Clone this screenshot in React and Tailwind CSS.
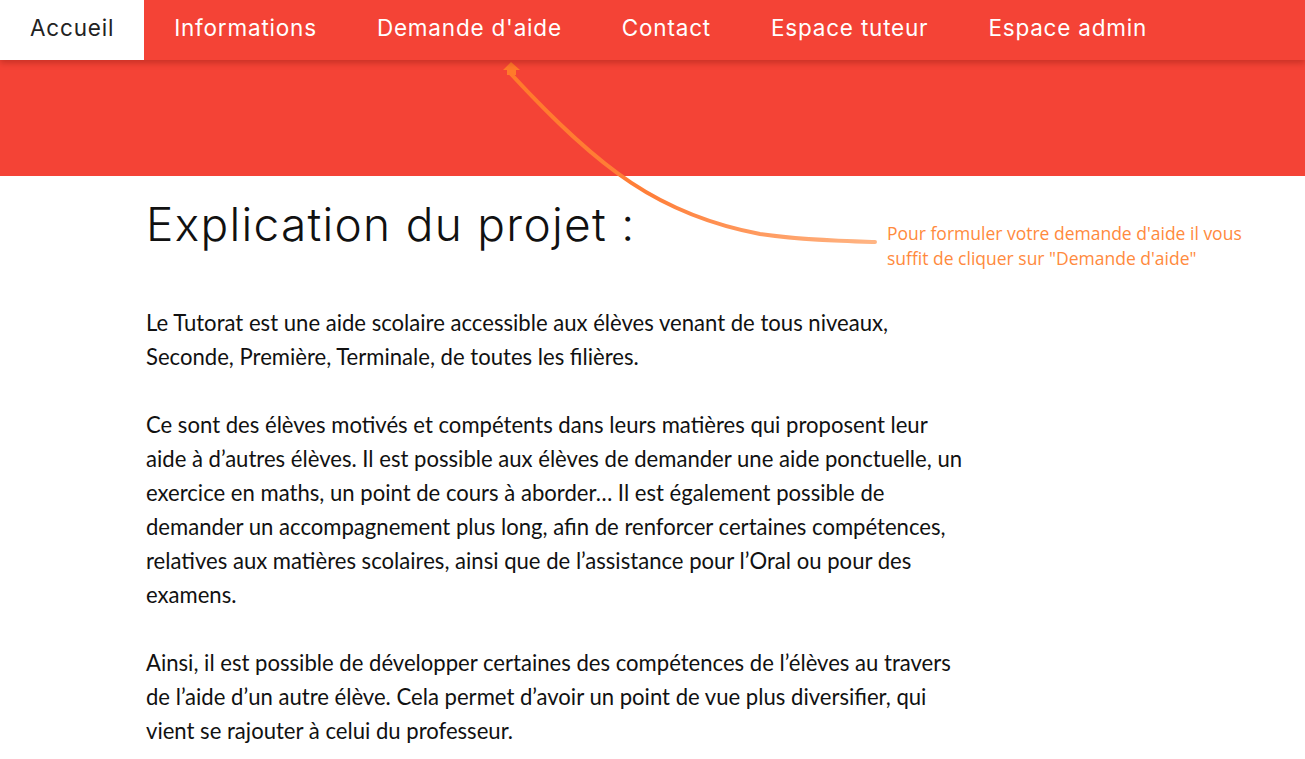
import React from "react";

const navItems = [
  { label: "Accueil", active: true },
  { label: "Informations" },
  { label: "Demande d'aide" },
  { label: "Contact" },
  { label: "Espace tuteur" },
  { label: "Espace admin" },
];

function Navbar() {
  return (
    <div className="relative z-10 flex h-[60px] bg-[#f44336] shadow-[0_3px_6px_rgba(120,20,10,0.35)]">
      {navItems.map((item) => (
        <a
          key={item.label}
          href="#"
          className={`flex items-center px-[30px] pb-[5px] text-[22.5px] tracking-[0.8px] font-['Inter',sans-serif] font-normal ${
            item.active ? "bg-white text-[#222]" : "text-white"
          }`}
        >
          {item.label}
        </a>
      ))}
    </div>
  );
}

// flèche d'annotation vers "Demande d'aide"
function HintArrow() {
  return (
    <svg
      className="absolute left-0 top-0 pointer-events-none"
      width="1305"
      height="300"
      viewBox="0 0 1305 300"
    >
      <defs>
        <linearGradient id="arrowGrad" x1="510" y1="70" x2="875" y2="242" gradientUnits="userSpaceOnUse">
          <stop offset="0" stopColor="#ff7a2a" />
          <stop offset="0.45" stopColor="#ff7f3a" />
          <stop offset="1" stopColor="#ffb584" />
        </linearGradient>
      </defs>
      <path
        d="M511 74 C 600 170, 660 215, 760 234 C 800 240, 840 241, 875 242"
        fill="none"
        stroke="url(#arrowGrad)"
        strokeWidth="4"
        strokeLinecap="round"
      />
      <path d="M503 70 L511 62 L520 70 L516 70 L516 75 L507 75 L507 70 Z" fill="#ff7a2a" />
    </svg>
  );
}

export default function App() {
  return (
    <div className="relative min-h-[759px] bg-white overflow-hidden">
      <Navbar />
      <div className="h-[116px] bg-[#f44336]" />
      <HintArrow />

      <div className="flex">
        <div className="pl-[146px] w-[990px]">
          <h1 className="mt-[20px] text-[46px] leading-[56px] font-light text-[#111] font-['Inter',sans-serif] tracking-[1.3px]">
            Explication du projet :
          </h1>
          <div className="mt-[54px] w-[820px] text-[22.1px] leading-[34px] text-[#111] font-['Lato',sans-serif] flex flex-col gap-[34px]">
            <p>
              Le Tutorat est une aide scolaire accessible aux élèves venant de tous niveaux,
              Seconde, Première, Terminale, de toutes les filières.
            </p>
            <p>
              Ce sont des élèves motivés et compétents dans leurs matières qui proposent leur aide
              à d’autres élèves. Il est possible aux élèves de demander une aide ponctuelle, un
              exercice en maths, un point de cours à aborder… Il est également possible de
              demander un accompagnement plus long, afin de renforcer certaines compétences,
              relatives aux matières scolaires, ainsi que de l’assistance pour l’Oral ou pour des
              examens.
            </p>
            <p>
              Ainsi, il est possible de développer certaines des compétences de l’élèves au travers
              de l’aide d’un autre élève. Cela permet d’avoir un point de vue plus diversifier, qui
              vient se rajouter à celui du professeur.
            </p>
          </div>
        </div>
        <div className="pt-[45px]">
          <p className="w-[390px] -ml-[103px] text-[17.5px] leading-[25px] text-[#ff8a3d] font-['Open_Sans',sans-serif]">
            Pour formuler votre demande d'aide il vous suffit de cliquer sur "Demande d'aide"
          </p>
        </div>
      </div>
    </div>
  );
}
